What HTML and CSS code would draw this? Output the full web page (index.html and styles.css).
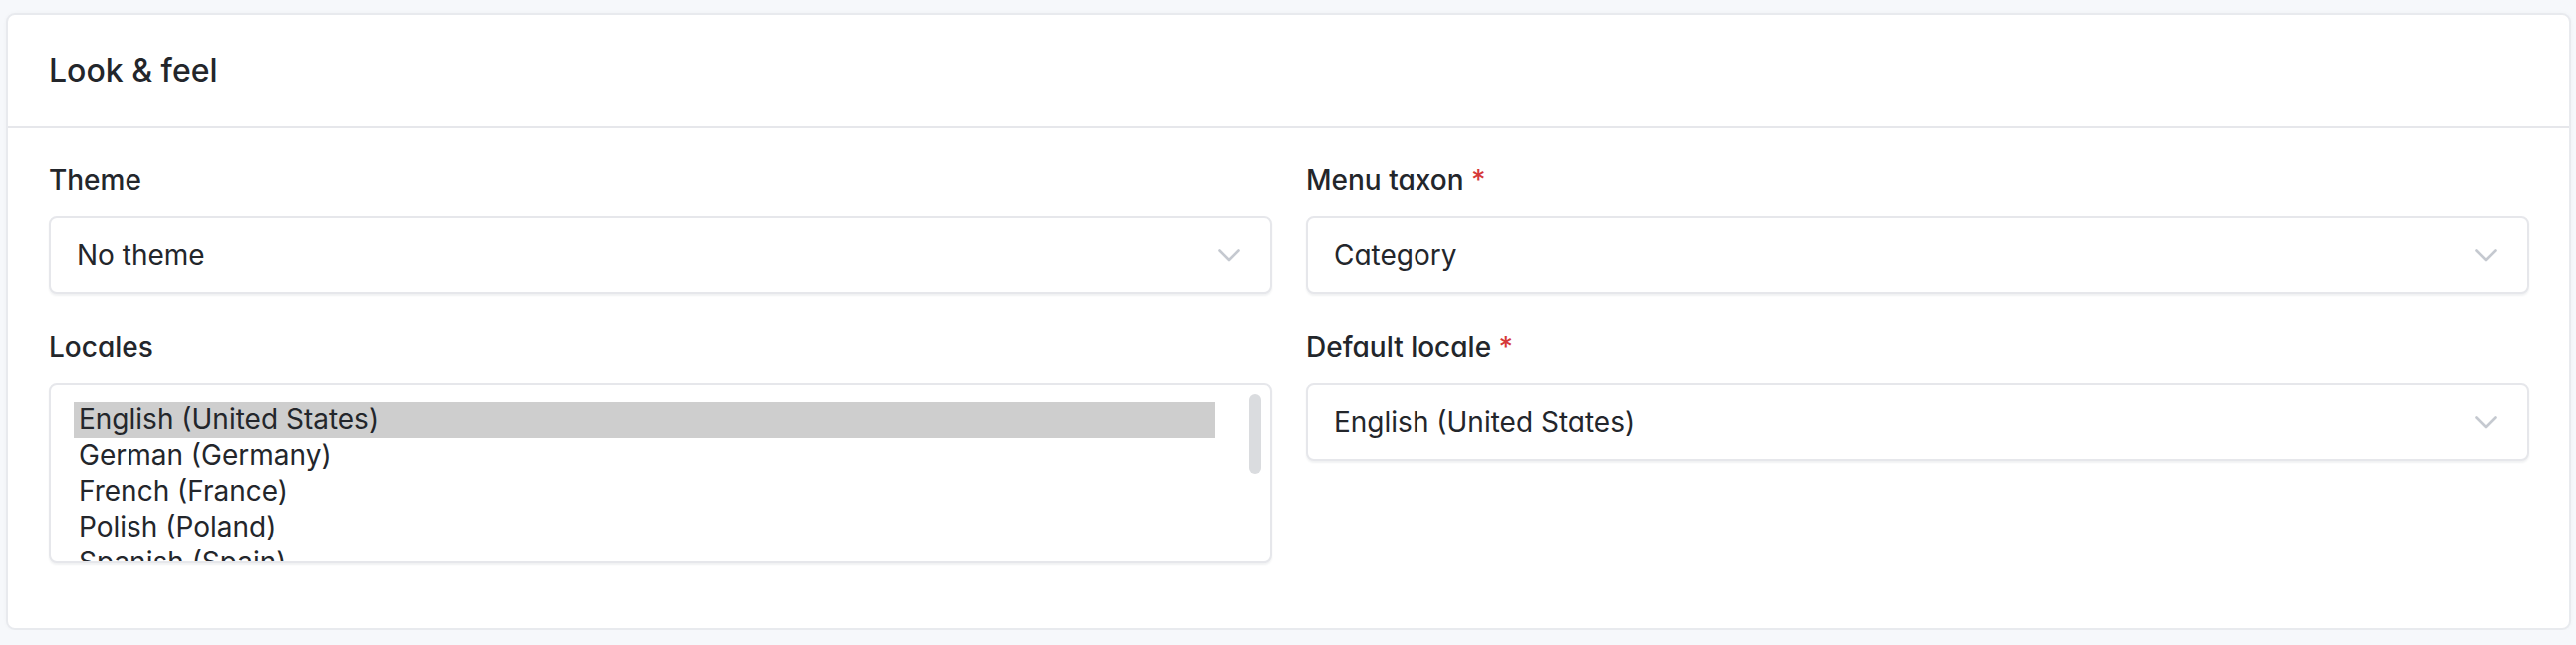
FILE: index.html
```html
<!DOCTYPE html>
<html lang="en">
<head>
<meta charset="utf-8">
<title>Look &amp; feel</title>
<link rel="stylesheet" href="styles.css">
</head>
<body>
<div class="page">
  <section class="card">
    <header class="card-header">
      <h3 class="card-title">Look &amp; feel</h3>
    </header>
    <div class="card-body">
      <div class="grid">
        <div class="col">
          <div class="field">
            <label class="label">Theme</label>
            <div class="select">
              <span class="select-value">No theme</span>
              <svg class="chevron" viewBox="0 0 22 13" aria-hidden="true"><path d="M1.5 1.5 L11 11 L20.5 1.5"/></svg>
            </div>
          </div>
          <div class="field">
            <label class="label">Locales</label>
            <div class="listbox">
              <div class="options">
                <div class="option is-selected">English (United States)</div>
                <div class="option">German (Germany)</div>
                <div class="option">French (France)</div>
                <div class="option">Polish (Poland)</div>
                <div class="option">Spanish (Spain)</div>
              </div>
              <div class="thumb"></div>
            </div>
          </div>
        </div>
        <div class="col">
          <div class="field">
            <label class="label">Menu taxon <span class="req">*</span></label>
            <div class="select">
              <span class="select-value">Category</span>
              <svg class="chevron" viewBox="0 0 22 13" aria-hidden="true"><path d="M1.5 1.5 L11 11 L20.5 1.5"/></svg>
            </div>
          </div>
          <div class="field">
            <label class="label">Default locale <span class="req">*</span></label>
            <div class="select">
              <span class="select-value">English (United States)</span>
              <svg class="chevron" viewBox="0 0 22 13" aria-hidden="true"><path d="M1.5 1.5 L11 11 L20.5 1.5"/></svg>
            </div>
          </div>
        </div>
      </div>
    </div>
  </section>
</div>
</body>
</html>
```
FILE: styles.css
```css
* { box-sizing: border-box; }

html, body {
  margin: 0;
  padding: 0;
  background: #f6f8fb;
}

body {
  font-family: Inter, "Noto Sans", "Liberation Sans", sans-serif;
  color: #23262b;
  font-feature-settings: "cv11";
}

.page {
  padding: 13px 5px 0 6px;
}

.card {
  background: #ffffff;
  border: 2px solid #e8eaee;
  border-radius: 9px;
  box-shadow: 0 0 4px rgba(24, 36, 51, 0.03);
}

.card-header {
  padding: 32px 41px;
  border-bottom: 2px solid #e6e7eb;
}

.card-title {
  margin: 0;
  font-size: 32px;
  line-height: 48px;
  font-weight: 500;
}

.card-body {
  padding: 32px 40px 31px 41px;
}

.grid {
  display: grid;
  grid-template-columns: 1fr 1fr;
  column-gap: 34px;
}

.field {
  margin-bottom: 34px;
}

.label {
  display: block;
  font-size: 28px;
  line-height: 40px;
  font-weight: 500;
  margin-bottom: 16px;
}

.req {
  color: #d63939;
}

.select {
  display: flex;
  align-items: center;
  justify-content: space-between;
  height: 78px;
  padding: 0 30px 0 26px;
  border: 2px solid #e6e7eb;
  border-radius: 8px;
  background: #ffffff;
  box-shadow: 0 2px 2px rgba(24, 36, 51, 0.06);
}

.select-value {
  font-size: 28px;
  line-height: 40px;
  font-weight: 400;
}

.chevron {
  width: 22px;
  height: 13px;
  flex: none;
}

.chevron path {
  fill: none;
  stroke: #c5c9d0;
  stroke-width: 2.6;
  stroke-linecap: round;
  stroke-linejoin: round;
}

.listbox {
  position: relative;
  height: 181px;
  overflow: hidden;
  padding: 17px 55px 0 23px;
  border: 2px solid #e6e7eb;
  border-radius: 8px;
  background: #ffffff;
  box-shadow: 0 2px 2px rgba(24, 36, 51, 0.06);
}

.option {
  font-size: 28px;
  line-height: 34px;
  padding: 0 4px 2px 5px;
  font-feature-settings: normal;
  white-space: nowrap;
}

.option.is-selected {
  background: #cecece;
}

.thumb {
  position: absolute;
  top: 9px;
  right: 9px;
  width: 12px;
  height: 80px;
  border-radius: 6px;
  background: #dadcdf;
}
```
